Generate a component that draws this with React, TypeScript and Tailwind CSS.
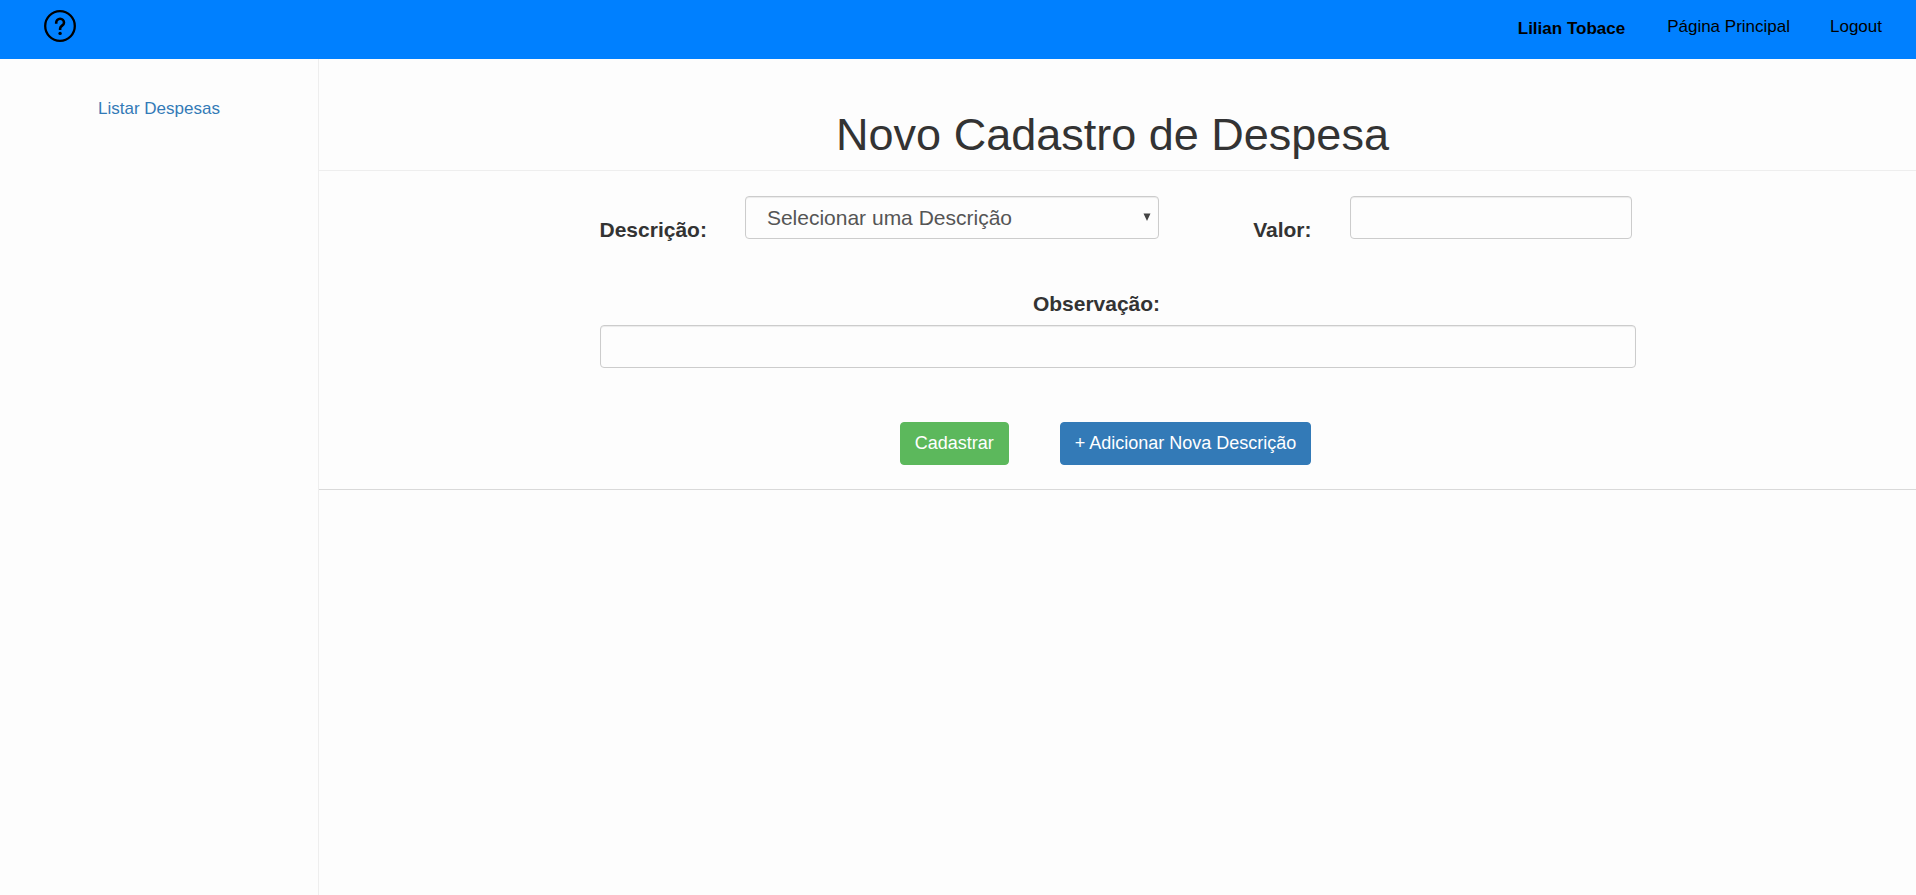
import React from "react";

const field =
  "h-[43px] rounded border border-[#cccccc] bg-[#fdfdfd] px-4 text-[21px] text-[#555555] shadow-[inset_0_1px_1px_rgba(0,0,0,0.075)] outline-none focus:border-[#66afe9]";

function HelpIcon() {
  return (
    <svg viewBox="0 0 32 32" className="h-8 w-8" fill="none" stroke="black" aria-hidden="true">
      <circle cx="16" cy="16" r="14.8" strokeWidth="2.3" />
      <path
        d="M12.2 13.8V12.7a3.9 3.9 0 0 1 7.8 0c0 2.9-3.9 3-3.9 6v1.4"
        strokeWidth="2.6"
      />
      <circle cx="16.1" cy="23.4" r="1.7" fill="black" stroke="none" />
    </svg>
  );
}

function Header() {
  return (
    <header className="flex h-[59px] items-start justify-between bg-[#0080ff] pr-[34px] pl-11 text-[17px] leading-6 text-black">
      <a href="#ajuda" aria-label="Ajuda" className="pt-[10px]">
        <HelpIcon />
      </a>
      <nav className="flex pt-[15px]">
        <span className="mr-[42px] pt-[2px] font-bold">Lilian Tobace</span>
        <a href="#principal" className="mr-10">
          Página Principal
        </a>
        <a href="#logout">Logout</a>
      </nav>
    </header>
  );
}

function ExpenseForm() {
  return (
    <form
      className="border-b border-[#d9d9d9] pt-[25px] pb-6"
      onSubmit={(event) => event.preventDefault()}
    >
      <div className="mx-auto w-[65%] max-w-[1036px]">
        <div className="flex items-start">
          <label htmlFor="descricao" className="mr-[38px] pt-5 text-[21px] leading-7 font-bold">
            Descrição:
          </label>
          <div className="relative w-[40%]">
            <select id="descricao" className={`${field} w-full appearance-none pr-8 pl-[21px]`}>
              <option>Selecionar uma Descrição</option>
            </select>
            <svg
              viewBox="0 0 8 8"
              className="pointer-events-none absolute top-[17px] right-2 h-2 w-2"
              aria-hidden="true"
            >
              <path d="M0.5 0.5H7.5L4 8Z" fill="#444444" />
            </svg>
          </div>
          <label
            htmlFor="valor"
            className="mr-[38px] ml-auto pt-5 text-[21px] leading-7 font-bold"
          >
            Valor:
          </label>
          <input id="valor" type="text" className={`${field} mr-1 w-[282px]`} />
        </div>
        <div className="mt-[46px] flex flex-col">
          <label
            htmlFor="observacao"
            className="pr-[42px] pb-[7px] text-center text-[21px] leading-7 font-bold"
          >
            Observação:
          </label>
          <input id="observacao" type="text" className={`${field} w-full`} />
        </div>
      </div>
      <div className="mt-[54px] flex items-center justify-center gap-[51px] pr-6 text-[18px] text-white">
        <button
          type="submit"
          className="h-[43px] rounded border border-[#5cb85c] bg-[#5cb85c] px-[14px]"
        >
          Cadastrar
        </button>
        <button
          type="button"
          className="h-[43px] rounded border border-[#337ab7] bg-[#337ab7] px-[14px]"
        >
          + Adicionar Nova Descrição
        </button>
      </div>
    </form>
  );
}

export default function App() {
  return (
    <div className="flex min-h-screen flex-col bg-[#fdfdfd] font-['Liberation_Sans',Arial,sans-serif] text-[#333333]">
      <Header />
      <div className="flex grow">
        <aside className="w-[319px] shrink-0 border-r border-[#eeeeee] pt-[38px] text-center text-[17px] leading-6">
          <a href="#despesas" className="text-[#337ab7] hover:underline">
            Listar Despesas
          </a>
        </aside>
        <main className="min-w-0 grow">
          <h1 className="border-b border-[#eeeeee] pt-[51px] pr-[10px] pb-[10px] text-center text-[45px] leading-[50px]">
            Novo Cadastro de Despesa
          </h1>
          <ExpenseForm />
        </main>
      </div>
    </div>
  );
}
